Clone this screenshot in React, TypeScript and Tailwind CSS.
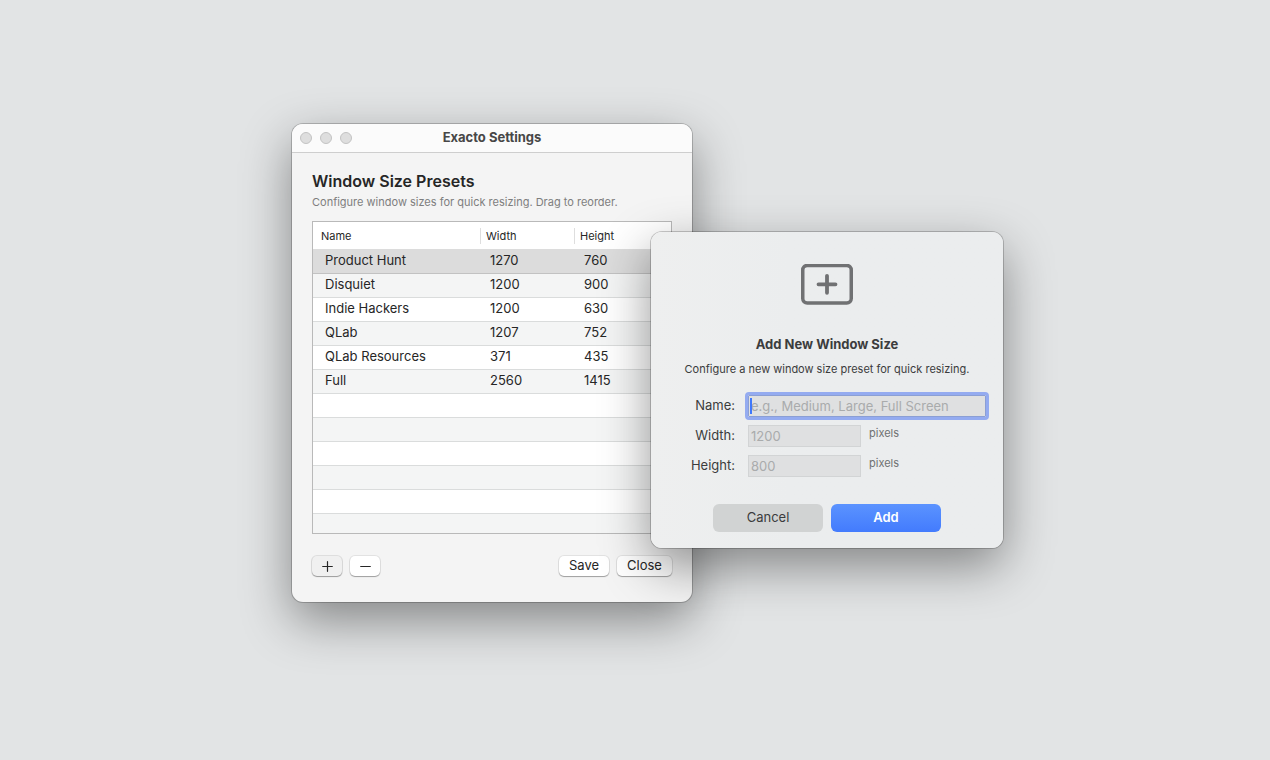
import { useState } from 'react';

interface Preset {
  name: string;
  width: number;
  height: number;
}

const PRESETS: Preset[] = [
  { name: 'Product Hunt', width: 1270, height: 760 },
  { name: 'Disquiet', width: 1200, height: 900 },
  { name: 'Indie Hackers', width: 1200, height: 630 },
  { name: 'QLab', width: 1207, height: 752 },
  { name: 'QLab Resources', width: 371, height: 435 },
  { name: 'Full', width: 2560, height: 1415 },
];

const EMPTY_ROWS = [0, 1, 2, 3, 4];

const TitleBar = ({ title }: { title: string }) => (
  <header className="relative flex h-[29px] items-center justify-center rounded-t-[11px] border-b border-[#cecece] bg-[#fbfbfb]">
    <div className="absolute left-2 flex gap-2">
      <button type="button" aria-label="Close window" className="size-3 rounded-full border border-[#c3c3c3] bg-[#dedede]" />
      <button type="button" aria-label="Minimize window" className="size-3 rounded-full border border-[#c3c3c3] bg-[#dedede]" />
      <button type="button" aria-label="Zoom window" className="size-3 rounded-full border border-[#c3c3c3] bg-[#dedede]" />
    </div>
    <h1 className="pb-0.5 text-[13px] leading-4 font-bold text-[#474747]">{title}</h1>
  </header>
);

const PresetTable = () => {
  const [selected, setSelected] = useState(0);

  return (
    <div className="h-[313px] overflow-hidden border border-[#b9b9b9] bg-white">
      <table className="w-full table-fixed border-separate border-spacing-0 text-left text-[#262626]">
        <colgroup>
          <col className="w-[168px]" />
          <col className="w-[94px]" />
          <col />
        </colgroup>
        <thead>
          <tr className="h-7 text-[11px] leading-4">
            <th className="border-b border-[#dcdcdc] p-0 font-normal">
              <div className="border-r border-[#dedede] pl-2">Name</div>
            </th>
            <th className="border-b border-[#dcdcdc] p-0 font-normal">
              <div className="border-r border-[#dedede] pl-[5px]">Width</div>
            </th>
            <th className="border-b border-[#dcdcdc] p-0 pl-[5px] font-normal">Height</th>
          </tr>
        </thead>
        <tbody className="text-[13px] leading-4">
          {PRESETS.map((preset, index) => (
            <tr
              key={preset.name}
              onClick={() => setSelected(index)}
              className={`h-6 ${selected === index ? 'bg-[#dcdcdc]' : 'odd:bg-white even:bg-[#f4f5f5]'}`}
            >
              <td className={`border-b p-0 pb-1 pl-3 ${selected === index ? 'border-[#c2c2c2]' : 'border-[#dadcdc]'}`}>
                {preset.name}
              </td>
              <td className={`border-b p-0 pb-1 pl-[9px] ${selected === index ? 'border-[#c2c2c2]' : 'border-[#dadcdc]'}`}>
                {preset.width}
              </td>
              <td className={`border-b p-0 pb-1 pl-[9px] ${selected === index ? 'border-[#c2c2c2]' : 'border-[#dadcdc]'}`}>
                {preset.height}
              </td>
            </tr>
          ))}
          {EMPTY_ROWS.map((row) => (
            <tr key={row} className="h-6 odd:bg-white even:bg-[#f4f5f5]">
              <td colSpan={3} className="border-b border-[#dadcdc] p-0" />
            </tr>
          ))}
          <tr className="h-6 bg-[#f4f5f5]">
            <td colSpan={3} className="p-0" />
          </tr>
        </tbody>
      </table>
    </div>
  );
};

const SettingsWindow = () => (
  <section className="absolute top-[124px] left-[292px] w-[400px] rounded-[11px] bg-[#f4f4f4] shadow-[0_0_0_1px_rgba(0,0,0,0.2),0_18px_50px_rgba(0,0,0,0.42)]">
    <TitleBar title="Exacto Settings" />
    <div className="px-5 pt-[18px] pb-[26px]">
      <h2 className="text-[16px] leading-5 font-semibold text-[#262626]">Window Size Presets</h2>
      <p className="mt-[3px] mb-[11px] text-[11px] leading-4 text-[#7e7e7e]">
        Configure window sizes for quick resizing. Drag to reorder.
      </p>
      <PresetTable />
      <div className="mt-[22px] flex items-center gap-2 text-[13px] leading-4 text-[#262626]">
        <button
          type="button"
          aria-label="Add preset"
          className="flex h-5 w-[30px] items-center justify-center rounded-[5px] bg-[#f0f0f0] shadow-[0_0_0_1px_rgba(0,0,0,0.09),0_1px_1px_rgba(0,0,0,0.3)]"
        >
          <svg width="11" height="11" viewBox="0 0 11 11" stroke="currentColor" strokeWidth="1.2" strokeLinecap="round">
            <path d="M5.5 .7v9.6M.7 5.5h9.6" />
          </svg>
        </button>
        <button
          type="button"
          aria-label="Remove preset"
          className="flex h-5 w-[30px] items-center justify-center rounded-[5px] bg-white shadow-[0_0_0_1px_rgba(0,0,0,0.07),0_1px_1px_rgba(0,0,0,0.3)]"
        >
          <svg width="11" height="11" viewBox="0 0 11 11" stroke="currentColor" strokeWidth="1.2" strokeLinecap="round">
            <path d="M.7 5.5h9.6" />
          </svg>
        </button>
        <button
          type="button"
          className="ml-auto h-5 w-[50px] rounded-[5px] bg-white pb-0.5 shadow-[0_0_0_1px_rgba(0,0,0,0.07),0_1px_1px_rgba(0,0,0,0.3)]"
        >
          Save
        </button>
        <button
          type="button"
          className="h-5 w-[55px] rounded-[5px] bg-white pb-0.5 shadow-[0_0_0_1px_rgba(0,0,0,0.07),0_1px_1px_rgba(0,0,0,0.3)]"
        >
          Close
        </button>
      </div>
    </div>
  </section>
);

const AddSizeDialog = () => (
  <form
    aria-labelledby="dialog-title"
    onSubmit={(e) => e.preventDefault()}
    className="absolute top-[232px] left-[651px] flex w-[352px] flex-col rounded-[11px] bg-linear-to-r from-[#eeefef] to-[#ebedee] to-40% pt-8 pb-4 text-[#3b3c3d] shadow-[0_0_0_1px_rgba(0,0,0,0.2),0_18px_50px_rgba(0,0,0,0.42)]"
  >
    <svg className="self-center text-[#707173]" width="52" height="41" viewBox="0 0 52 41" fill="none" stroke="currentColor" strokeLinecap="round">
      <rect x="1.75" y="1.5" width="48.5" height="37.5" rx="4.5" strokeWidth="3.5" />
      <path d="M26 11.8v17M17.5 20.3h17" strokeWidth="3.8" />
    </svg>
    <h2 id="dialog-title" className="mt-[31px] text-center text-[13px] leading-4 font-bold">
      Add New Window Size
    </h2>
    <p className="mt-[9px] text-center text-[11px] leading-4">Configure a new window size preset for quick resizing.</p>
    <div className="mt-[18px] grid grid-cols-[84px_1fr] gap-x-[13px] gap-y-2 pr-[17px] text-[13px] leading-5">
      <label htmlFor="name" className="text-right">
        Name:
      </label>
      <div className="relative flex">
        <input
          id="name"
          type="text"
          placeholder="e.g., Medium, Large, Full Screen"
          className="h-[22px] w-full rounded-[1px] border border-[#8b9fd4] bg-[#dfe0e1] px-0.5 outline-3 outline-[#94abf0] placeholder:text-[#a9abac]"
        />
        <span className="absolute top-[3px] left-0.5 h-4 w-0.5 bg-[#3f78fb]" />
      </div>
      <label htmlFor="width" className="text-right">
        Width:
      </label>
      <div className="flex gap-2">
        <input
          id="width"
          type="text"
          placeholder="1200"
          className="h-[22px] w-[113px] border border-[#d2d4d5] bg-[#dfe0e1] px-0.5 placeholder:text-[#a9abac]"
        />
        <span className="text-[11px] leading-4 text-[#6f7172]">pixels</span>
      </div>
      <label htmlFor="height" className="text-right">
        Height:
      </label>
      <div className="flex gap-2">
        <input
          id="height"
          type="text"
          placeholder="800"
          className="h-[22px] w-[113px] border border-[#d2d4d5] bg-[#dfe0e1] px-0.5 placeholder:text-[#a9abac]"
        />
        <span className="text-[11px] leading-4 text-[#6f7172]">pixels</span>
      </div>
    </div>
    <div className="mt-[27px] flex justify-center gap-2 text-[13px] leading-4">
      <button type="button" className="h-7 w-[110px] rounded-md bg-[#d1d3d3] pb-0.5">
        Cancel
      </button>
      <button type="submit" className="h-7 w-[110px] rounded-md bg-linear-to-b from-[#5b93ff] to-[#437bfd] pb-0.5 font-semibold text-white">
        Add
      </button>
    </div>
  </form>
);

const App = () => (
  <main className="relative min-h-screen bg-[#e2e4e5] font-[Inter,'Liberation_Sans',sans-serif]">
    <SettingsWindow />
    <AddSizeDialog />
  </main>
);

export default App;
